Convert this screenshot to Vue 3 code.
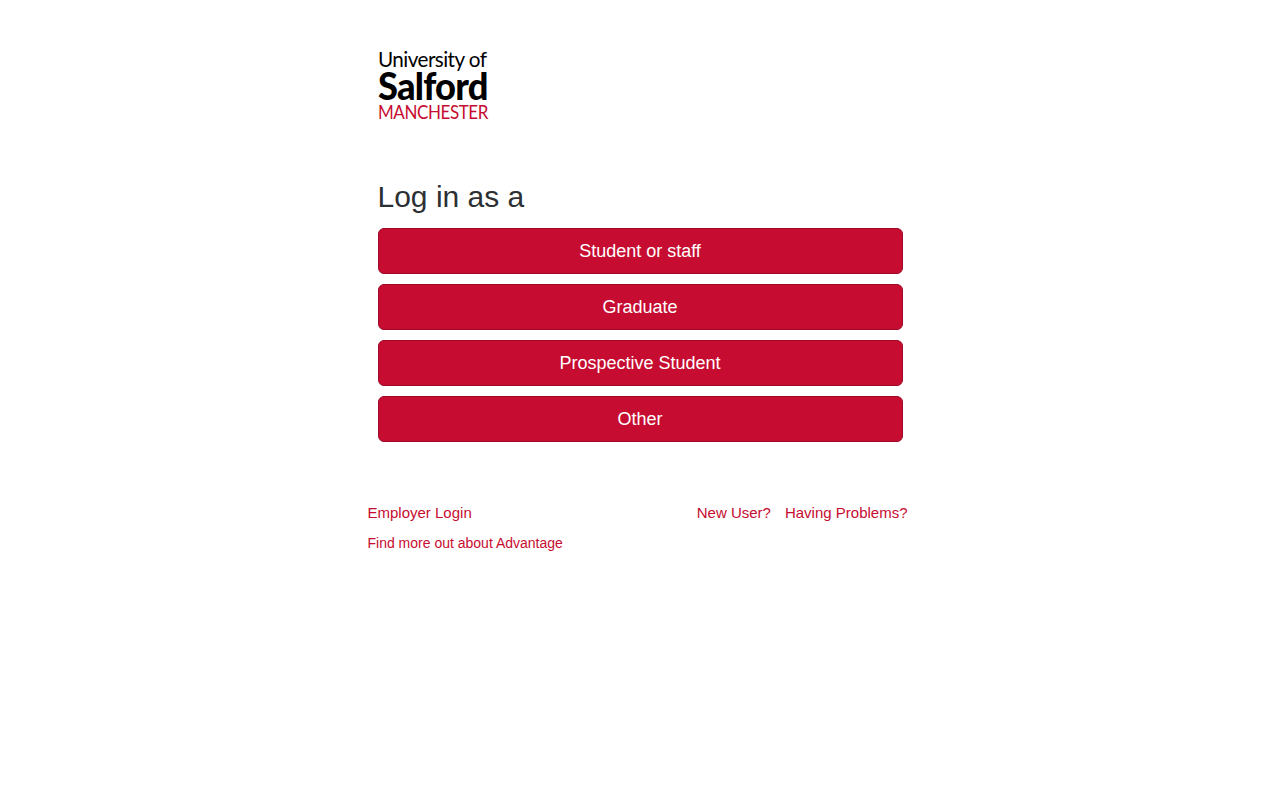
<script setup>
const roles = ['Student or staff', 'Graduate', 'Prospective Student', 'Other']
</script>

<template>
  <main class="page">
    <div class="logo" aria-label="University of Salford Manchester">
      <div class="l1">University of</div>
      <div class="l2">Salford</div>
      <div class="l3">MANCHESTER</div>
    </div>
    <h1 class="title">Log in as a</h1>
    <div class="buttons">
      <button v-for="r in roles" :key="r" class="btn" type="button">{{ r }}</button>
    </div>
    <div class="links">
      <a class="link">Employer Login</a>
      <div class="right">
        <a class="link">New User?</a>
        <a class="link">Having Problems?</a>
      </div>
    </div>
    <a class="link small">Find more out about Advantage</a>
  </main>
</template>

<style scoped>
.page {
  width: 540px;
  margin-left: 367.5px;
  font-family: "Liberation Sans", Arial, sans-serif;
  display: flex;
  flex-direction: column;
  align-items: flex-start;
}
.logo {
  margin: 48px 0 0 10px;
  height: 73px;
  width: 112px;
  font-family: Lato, sans-serif;
  color: #000;
  display: flex;
  flex-direction: column;
  white-space: nowrap;
}
.l1, .l2, .l3 {
  transform-origin: left center;
}
.l1 {
  font-size: 22px;
  line-height: 21px;
  height: 21px;
  letter-spacing: -0.6px;
  transform: scaleX(0.94);
}
.l2 {
  font-size: 37px;
  line-height: 33px;
  height: 33px;
  font-weight: 900;
  letter-spacing: -0.8px;
  transform: scaleX(0.98);
}
.l3 {
  font-size: 20px;
  line-height: 19px;
  height: 19px;
  color: #c60c30;
  letter-spacing: -0.5px;
  transform: scaleX(0.85);
}
.title {
  margin: 58px 0 0 10px;
  font-size: 30px;
  line-height: 36px;
  font-weight: 400;
  color: #2d3033;
  height: 36px;
}
.buttons {
  width: 525px;
  margin: 13px 0 0 10.5px;
  display: flex;
  flex-direction: column;
  gap: 10px;
}
.btn {
  height: 46px;
  width: 100%;
  padding: 0 1px 0 0;
  background: #c60c30;
  border: 1px solid #9e0a28;
  border-radius: 6px;
  color: #fff;
  font-family: inherit;
  font-size: 18px;
  line-height: 24px;
}
.links {
  width: 100%;
  margin-top: 61px;
  display: flex;
  justify-content: space-between;
  line-height: 20px;
}
.right {
  display: flex;
  gap: 14px;
}
.link {
  color: #c60c30;
  font-size: 15px;
  line-height: 20px;
}
.small {
  font-size: 14px;
  margin-top: 10px;
}
</style>
